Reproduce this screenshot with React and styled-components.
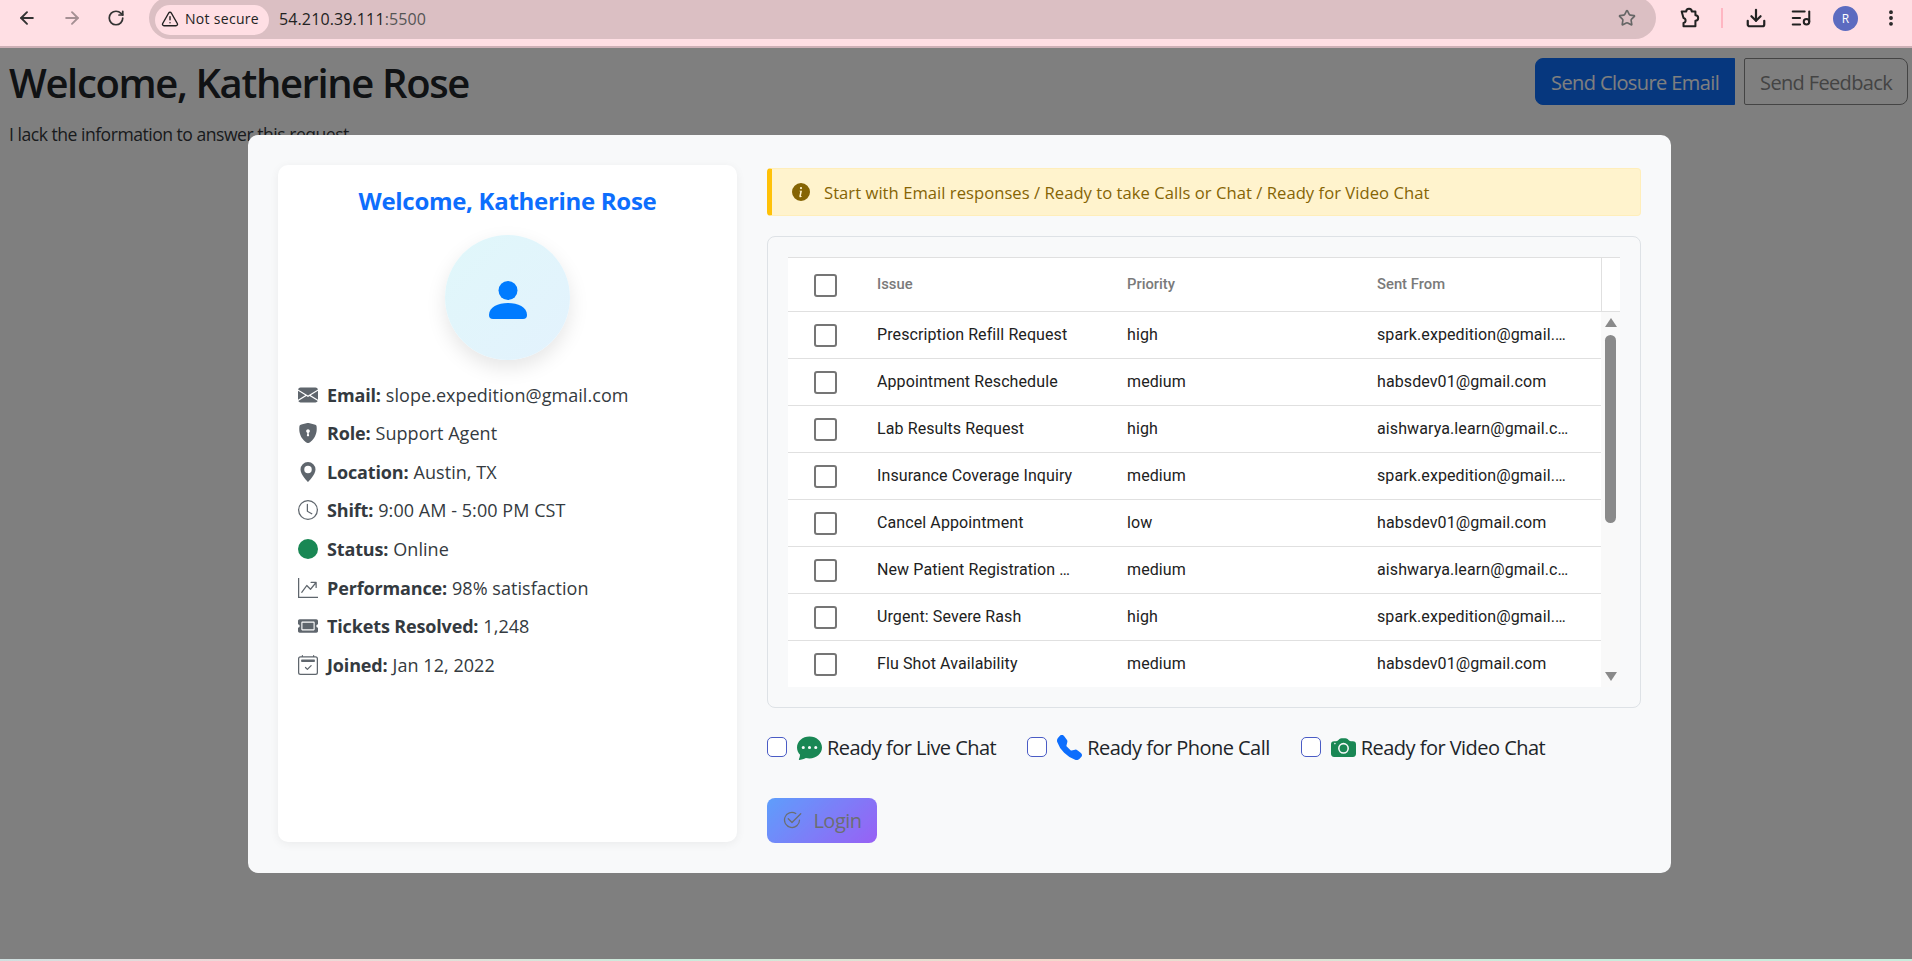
import React from "react";
import styled, { createGlobalStyle } from "styled-components";
import { ArrowLeft, ArrowRight, RotateCw, Star, Download, TriangleAlert, ListMusic, EllipsisVertical } from "lucide-react";
import {
  BsEnvelopeFill,
  BsShieldLockFill,
  BsGeoAltFill,
  BsClock,
  BsCircleFill,
  BsGraphUpArrow,
  BsCalendar2Check,
  BsInfoCircleFill,
  BsChatDotsFill,
  BsTelephoneFill,
  BsCameraFill,
  BsCheck2Circle,
} from "react-icons/bs";
import { FaTicketAlt } from "react-icons/fa";

const UI_FONT = `"Open Sans", "Noto Sans", sans-serif`;

const GlobalStyle = createGlobalStyle`
  html, body {
    margin: 0;
    height: 100%;
    overflow: hidden;
    background: #fff;
    font-family: ${UI_FONT};
    color: #212529;
  }
  * { box-sizing: border-box; }
`;

const Shell = styled.div`
  height: 961px;
  display: flex;
  flex-direction: column;
`;

/* browser toolbar */
const Toolbar = styled.div`
  height: 48px;
  flex: none;
  background: #ffdfe4;
  border-bottom: 2px solid #cdb0b6;
  display: flex;
  align-items: flex-start;
  color: #333;
`;

const NavIcons = styled.div`
  width: 149px;
  height: 36px;
  flex: none;
  display: flex;
  align-items: center;
  gap: 25px;
  padding-left: 17px;
`;

const AddressBar = styled.div`
  width: 1507px;
  height: 42px;
  margin-top: -3px;
  flex: none;
  background: #dbbfc3;
  border-radius: 21px;
  display: flex;
  align-items: center;
  padding: 0 20px 0 6px;
`;

const SecureChip = styled.div`
  width: 114px;
  height: 30px;
  margin-top: 3px;
  padding: 0 0 2px 6px;
  border-radius: 15px;
  background: #ffdfe4;
  display: flex;
  align-items: center;
  gap: 6px;
  font-size: 14px;
  font-weight: 500;
  letter-spacing: 0.3px;
  color: #222;
`;

const Url = styled.div`
  margin: 1px 0 0 10px;
  flex: 1;
  font-size: 16px;
  letter-spacing: 0.12px;
  color: #555;
  b {
    font-weight: 400;
    color: #222;
  }
`;

const ToolIcons = styled.div`
  flex: 1;
  height: 36px;
  display: flex;
  align-items: center;
  padding-left: 22px;
`;

const ToolSeparator = styled.div`
  width: 2px;
  height: 20px;
  margin: 0 22px 0 21px;
  background: #ffb6c2;
`;

const ToolGap = styled.span`
  width: 23px;
  flex: none;
`;

const ProfileBadge = styled.div`
  width: 25px;
  height: 25px;
  margin: 0 23px 0 21px;
  border-radius: 50%;
  background: #5c6bc0;
  color: #fff;
  font-size: 12px;
  display: flex;
  align-items: center;
  justify-content: center;
`;

/* page behind the modal */
const Page = styled.div`
  position: relative;
  flex: 1;
  padding: 10px 4px 0 9px;
`;

const PageHead = styled.div`
  display: flex;
  justify-content: space-between;
  align-items: flex-start;
`;

const PageTitle = styled.h1`
  margin: 0;
  padding-top: 1px;
  font-size: 40px;
  font-weight: 600;
  letter-spacing: -1.37px;
  line-height: 48px;
`;

const HeadButtons = styled.div`
  display: flex;
  gap: 9px;
`;

const HeadButton = styled.button`
  height: 47px;
  padding: 2px 15px 0;
  font: 400 20px ${UI_FONT};
  letter-spacing: ${({ $primary }) => ($primary ? "-0.6px" : "-0.65px")};
  border: 1px solid ${({ $primary }) => ($primary ? "#0d6efd" : "#888")};
  background: ${({ $primary }) => ($primary ? "#0d6efd" : "transparent")};
  color: ${({ $primary }) => ($primary ? "#fff" : "#888")};
  border-radius: ${({ $primary }) => ($primary ? "8px 0 0 8px" : "2px 8px 8px 2px")};
`;

const PageNote = styled.p`
  margin: 15px 0 0;
  font-size: 17.6px;
  letter-spacing: -0.5px;
  color: #33373b;
`;

const Overlay = styled.div`
  position: absolute;
  inset: 0 0 2px 0;
  background: rgba(0, 0, 0, 0.5);
  display: flex;
  align-items: center;
  justify-content: center;
  padding-left: 7px;
`;

const Modal = styled.div`
  width: 1423px;
  height: 738px;
  padding: 30px;
  background: #f8f9fa;
  border-radius: 10px;
  display: flex;
  gap: 30px;
`;

/* profile card */
const ProfileCard = styled.div`
  width: 459px;
  flex: none;
  height: 677px;
  background: #fff;
  border-radius: 10px;
  box-shadow: 0 2px 10px rgba(0, 0, 0, 0.06);
  padding: 20px;
`;

const CardTitle = styled.h2`
  margin: 0;
  text-align: center;
  color: #0d6efd;
  font-size: 24px;
  line-height: 32px;
  font-weight: 700;
  letter-spacing: -0.3px;
`;

const Avatar = styled.div`
  width: 125px;
  height: 125px;
  margin: 18px auto 22px;
  padding-top: 5px;
  border-radius: 50%;
  background: linear-gradient(135deg, #e0f7fa, #e3f2fd);
  box-shadow: 0 8px 20px rgba(0, 0, 0, 0.1);
  display: flex;
  align-items: center;
  justify-content: center;
`;

const InfoList = styled.div`
  display: flex;
  flex-direction: column;
  gap: 12.2px;
`;

const InfoRow = styled.div`
  display: flex;
  align-items: center;
  gap: 9px;
  height: 26.4px;
  font-size: 18px;
  letter-spacing: 0.05px;
  color: #343a40;
  white-space: nowrap;
  strong {
    font-weight: 700;
    letter-spacing: -0.15px;
    margin-right: 5px;
  }
`;

const InfoIcon = styled.span`
  width: 20px;
  flex: none;
  display: flex;
  justify-content: center;
  color: ${({ $color }) => $color || "#5f666d"};
`;

/* right column */
const MainColumn = styled.div`
  flex: 1;
  min-width: 0;
  padding-top: 3px;
`;

const Notice = styled.div`
  height: 48px;
  padding: 1px 0 0 20px;
  background: #fff3cd;
  border: 1px solid #ffeeba;
  border-left: 5px solid #ffc107;
  border-radius: 4px;
  display: flex;
  align-items: center;
  gap: 14px;
  font-size: 16.6px;
  letter-spacing: 0.04px;
  color: #856404;
`;

const GridWrap = styled.div`
  margin-top: 20px;
  width: 874px;
  height: 472px;
  border: 1px solid #dee2e6;
  border-radius: 8px;
  padding: 20px;
`;

const Grid = styled.div`
  width: 832px;
  height: 430px;
  background: #fff;
  border-top: 1px solid #e0e0e0;
  position: relative;
  overflow: hidden;
  font-family: Roboto, sans-serif;
  font-size: 16px;
  letter-spacing: 0.1px;
`;

const GridHeader = styled.div`
  height: 54px;
  display: grid;
  grid-template-columns: 79px 250px 250px 234px 19px;
  align-items: center;
  border-bottom: 1px solid #e0e0e0;
  color: #7a7a7a;
  font-size: 14.8px;
  letter-spacing: 0;
  font-weight: 500;
`;

const GridRow = styled.div`
  height: 47px;
  width: 813px;
  display: grid;
  grid-template-columns: 79px 250px 250px 234px;
  align-items: center;
  border-bottom: 1px solid #e0e0e0;
  color: #212121;
`;

const CheckCell = styled.div`
  display: flex;
  justify-content: center;
  padding-right: 4px;
`;

const Box = styled.span`
  width: 23px;
  height: 23px;
  margin-top: 2px;
  border: 2px solid #757575;
  border-radius: 3px;
  background: #fff;
`;

const Cell = styled.div`
  padding-left: 10px;
  max-width: ${({ $max }) => $max || "none"};
  white-space: nowrap;
  overflow: hidden;
  text-overflow: ellipsis;
`;

const HeaderEnd = styled.div`
  height: 100%;
  border-left: 1px solid #e0e0e0;
`;

const Scrollbar = styled.div`
  position: absolute;
  top: 54px;
  right: 0;
  bottom: 0;
  width: 19px;
  background: #f9f9f9;
  display: flex;
  flex-direction: column;
  align-items: center;
  padding-top: 6px;
`;

const ScrollArrow = styled.span`
  width: 0;
  height: 0;
  border-left: 6.5px solid transparent;
  border-right: 6.5px solid transparent;
  ${({ $down }) =>
    $down
      ? "border-top: 9px solid #8a8a8a; margin-top: auto; margin-bottom: 6px;"
      : "border-bottom: 9px solid #8a8a8a;"}
`;

const ScrollThumb = styled.span`
  width: 11px;
  height: 188px;
  margin-top: 8px;
  border-radius: 6px;
  background: #8a8a8a;
`;

/* ready toggles */
const ReadyRow = styled.div`
  margin-top: 26px;
  display: flex;
  align-items: center;
  gap: 31px;
`;

const ReadyLabel = styled.label`
  display: flex;
  align-items: center;
  font-size: 20px;
  letter-spacing: -0.53px;
  color: #212529;
`;

const ReadyBox = styled.span`
  width: 20px;
  height: 20px;
  margin-right: 10px;
  border: 1.5px solid #4a5cc5;
  border-radius: 5px;
  background: #fff;
`;

const ReadyIcon = styled.span`
  display: flex;
  margin-right: 5px;
  color: ${({ $color }) => $color};
`;

const LoginButton = styled.button`
  margin-top: 37px;
  width: 110px;
  height: 45px;
  border: 0;
  border-radius: 8px;
  display: flex;
  align-items: center;
  justify-content: center;
  gap: 11px;
  font: 400 20px ${UI_FONT};
  letter-spacing: -0.5px;
  color: #212529;
  background: linear-gradient(135deg, #0d6efd, #6610f2);
  opacity: 0.65;
`;

const BottomStrip = styled.div`
  position: absolute;
  left: 0;
  right: 0;
  bottom: 0;
  height: 2px;
  background: linear-gradient(90deg, #cfe0e0, #f3d6d6 14%, #c8ecdc 35%, #f3d8cc 55%, #c8ecdc 80%);
`;

const PROFILE = [
  { icon: <BsEnvelopeFill size={20} />, label: "Email:", value: "slope.expedition@gmail.com" },
  { icon: <BsShieldLockFill size={20} />, label: "Role:", value: "Support Agent" },
  { icon: <BsGeoAltFill size={20} />, label: "Location:", value: "Austin, TX" },
  { icon: <BsClock size={20} />, label: "Shift:", value: "9:00 AM - 5:00 PM CST" },
  { icon: <BsCircleFill size={20} />, color: "#198754", label: "Status:", value: "Online" },
  { icon: <BsGraphUpArrow size={20} />, label: "Performance:", value: "98% satisfaction" },
  { icon: <FaTicketAlt size={20} />, label: "Tickets Resolved:", value: "1,248" },
  { icon: <BsCalendar2Check size={20} />, label: "Joined:", value: "Jan 12, 2022" },
];

const ISSUES = [
  ["Prescription Refill Request", "high", "spark.expedition@gmail.com"],
  ["Appointment Reschedule", "medium", "habsdev01@gmail.com"],
  ["Lab Results Request", "high", "aishwarya.learn@gmail.com"],
  ["Insurance Coverage Inquiry", "medium", "spark.expedition@gmail.com"],
  ["Cancel Appointment", "low", "habsdev01@gmail.com"],
  ["New Patient Registration Form", "medium", "aishwarya.learn@gmail.com"],
  ["Urgent: Severe Rash", "high", "spark.expedition@gmail.com"],
  ["Flu Shot Availability", "medium", "habsdev01@gmail.com"],
];

const READY = [
  { icon: <BsChatDotsFill size={25} />, color: "#198754", label: "Ready for Live Chat" },
  { icon: <BsTelephoneFill size={25} />, color: "#0d6efd", label: "Ready for Phone Call" },
  { icon: <BsCameraFill size={25} />, color: "#198754", label: "Ready for Video Chat" },
];

function PersonIcon() {
  return (
    <svg width="38" height="38" viewBox="0 0 38 38" fill="#007bff">
      <circle cx="19" cy="9.5" r="9.5" />
      <path d="M0 34C0 26 9 22 19 22s19 4 19 12a4 4 0 0 1-4 4H4a4 4 0 0 1-4-4z" />
    </svg>
  );
}

function ExtensionIcon() {
  return (
    <svg width="22" height="22" viewBox="0 0 24 24" fill="none" stroke="#222" strokeWidth="2.2" strokeLinejoin="round">
      <path d="M4 5h5a3 3 0 0 1 6 0h4v4a3 3 0 0 1 0 6v6H6v-3.5a2.8 2.8 0 0 0 0-5.5L4 5z" />
    </svg>
  );
}

export default function App() {
  return (
    <Shell>
      <GlobalStyle />
      <Toolbar>
        <NavIcons>
          <ArrowLeft size={20} color="#333" strokeWidth={2.3} />
          <ArrowRight size={20} color="#a58f93" strokeWidth={2.3} />
          <RotateCw size={18} color="#333" strokeWidth={2.3} />
        </NavIcons>
        <AddressBar>
          <SecureChip>
            <TriangleAlert size={18} strokeWidth={1.9} />
            Not secure
          </SecureChip>
          <Url>
            <b>54.210.39.111</b>:5500
          </Url>
          <Star size={18} color="#666" strokeWidth={2.2} />
        </AddressBar>
        <ToolIcons>
          <ExtensionIcon />
          <ToolSeparator />
          <Download size={22} color="#222" strokeWidth={2.4} />
          <ToolGap />
          <ListMusic size={22} color="#222" strokeWidth={2.2} />
          <ProfileBadge>R</ProfileBadge>
          <EllipsisVertical size={20} color="#222" strokeWidth={2.6} />
        </ToolIcons>
      </Toolbar>

      <Page>
        <PageHead>
          <PageTitle>Welcome, Katherine Rose</PageTitle>
          <HeadButtons>
            <HeadButton $primary>Send Closure Email</HeadButton>
            <HeadButton>Send Feedback</HeadButton>
          </HeadButtons>
        </PageHead>
        <PageNote>I lack the information to answer this request.</PageNote>

        <Overlay>
          <Modal>
            <ProfileCard>
              <CardTitle>Welcome, Katherine Rose</CardTitle>
              <Avatar>
                <PersonIcon />
              </Avatar>
              <InfoList>
                {PROFILE.map((item) => (
                  <InfoRow key={item.label}>
                    <InfoIcon $color={item.color}>{item.icon}</InfoIcon>
                    <span>
                      <strong>{item.label}</strong>
                      {item.value}
                    </span>
                  </InfoRow>
                ))}
              </InfoList>
            </ProfileCard>

            <MainColumn>
              <Notice>
                <BsInfoCircleFill size={18} />
                Start with Email responses / Ready to take Calls or Chat / Ready for Video Chat
              </Notice>

              <GridWrap>
                <Grid>
                  <GridHeader>
                    <CheckCell>
                      <Box />
                    </CheckCell>
                    <Cell>Issue</Cell>
                    <Cell>Priority</Cell>
                    <Cell>Sent From</Cell>
                    <HeaderEnd />
                  </GridHeader>
                  {ISSUES.map(([issue, priority, from]) => (
                    <GridRow key={issue}>
                      <CheckCell>
                        <Box />
                      </CheckCell>
                      <Cell $max="208px">{issue}</Cell>
                      <Cell>{priority}</Cell>
                      <Cell $max="203px">{from}</Cell>
                    </GridRow>
                  ))}
                  <Scrollbar>
                    <ScrollArrow />
                    <ScrollThumb />
                    <ScrollArrow $down />
                  </Scrollbar>
                </Grid>
              </GridWrap>

              <ReadyRow>
                {READY.map((item) => (
                  <ReadyLabel key={item.label}>
                    <ReadyBox />
                    <ReadyIcon $color={item.color}>{item.icon}</ReadyIcon>
                    {item.label}
                  </ReadyLabel>
                ))}
              </ReadyRow>

              <LoginButton disabled>
                <BsCheck2Circle size={20} />
                Login
              </LoginButton>
            </MainColumn>
          </Modal>
        </Overlay>
        <BottomStrip />
      </Page>
    </Shell>
  );
}
